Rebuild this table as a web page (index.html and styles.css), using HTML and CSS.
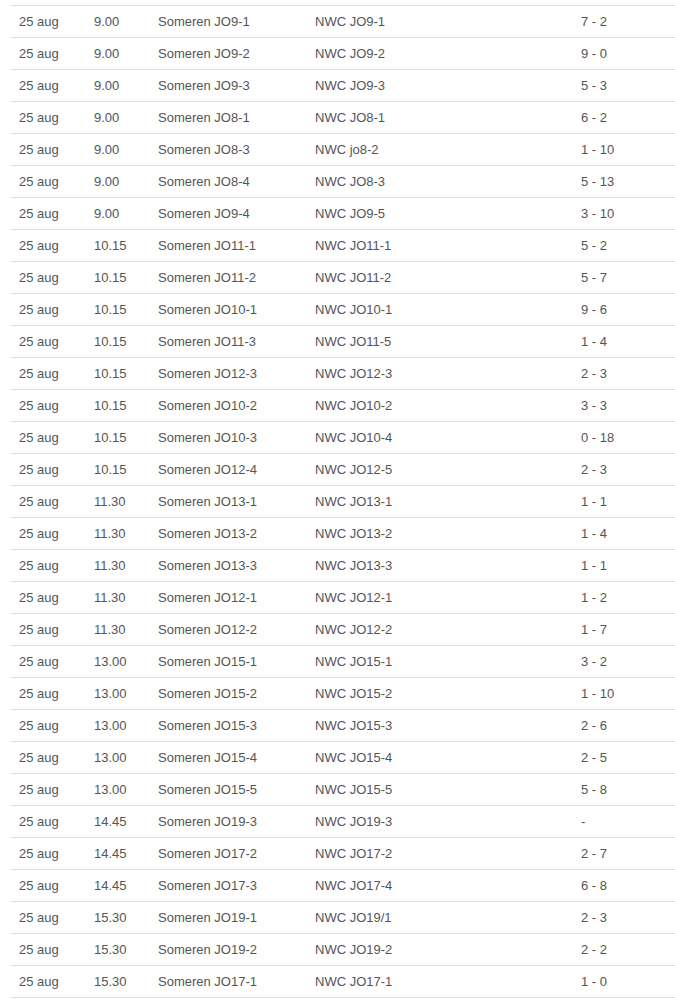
FILE: index.html
```html
<!DOCTYPE html>
<html>
<head>
<meta charset="utf-8">
<link rel="stylesheet" href="styles.css">
</head>
<body>
<div class="wrap">
<table class="matches">
<tbody>
<tr><td>25 aug</td><td>9.00</td><td>Someren JO9-1</td><td>NWC JO9-1</td><td>7 - 2</td></tr>
<tr><td>25 aug</td><td>9.00</td><td>Someren JO9-2</td><td>NWC JO9-2</td><td>9 - 0</td></tr>
<tr><td>25 aug</td><td>9.00</td><td>Someren JO9-3</td><td>NWC JO9-3</td><td>5 - 3</td></tr>
<tr><td>25 aug</td><td>9.00</td><td>Someren JO8-1</td><td>NWC JO8-1</td><td>6 - 2</td></tr>
<tr><td>25 aug</td><td>9.00</td><td>Someren JO8-3</td><td>NWC jo8-2</td><td>1 - 10</td></tr>
<tr><td>25 aug</td><td>9.00</td><td>Someren JO8-4</td><td>NWC JO8-3</td><td>5 - 13</td></tr>
<tr><td>25 aug</td><td>9.00</td><td>Someren JO9-4</td><td>NWC JO9-5</td><td>3 - 10</td></tr>
<tr><td>25 aug</td><td>10.15</td><td>Someren JO11-1</td><td>NWC JO11-1</td><td>5 - 2</td></tr>
<tr><td>25 aug</td><td>10.15</td><td>Someren JO11-2</td><td>NWC JO11-2</td><td>5 - 7</td></tr>
<tr><td>25 aug</td><td>10.15</td><td>Someren JO10-1</td><td>NWC JO10-1</td><td>9 - 6</td></tr>
<tr><td>25 aug</td><td>10.15</td><td>Someren JO11-3</td><td>NWC JO11-5</td><td>1 - 4</td></tr>
<tr><td>25 aug</td><td>10.15</td><td>Someren JO12-3</td><td>NWC JO12-3</td><td>2 - 3</td></tr>
<tr><td>25 aug</td><td>10.15</td><td>Someren JO10-2</td><td>NWC JO10-2</td><td>3 - 3</td></tr>
<tr><td>25 aug</td><td>10.15</td><td>Someren JO10-3</td><td>NWC JO10-4</td><td>0 - 18</td></tr>
<tr><td>25 aug</td><td>10.15</td><td>Someren JO12-4</td><td>NWC JO12-5</td><td>2 - 3</td></tr>
<tr><td>25 aug</td><td>11.30</td><td>Someren JO13-1</td><td>NWC JO13-1</td><td>1 - 1</td></tr>
<tr><td>25 aug</td><td>11.30</td><td>Someren JO13-2</td><td>NWC JO13-2</td><td>1 - 4</td></tr>
<tr><td>25 aug</td><td>11.30</td><td>Someren JO13-3</td><td>NWC JO13-3</td><td>1 - 1</td></tr>
<tr><td>25 aug</td><td>11.30</td><td>Someren JO12-1</td><td>NWC JO12-1</td><td>1 - 2</td></tr>
<tr><td>25 aug</td><td>11.30</td><td>Someren JO12-2</td><td>NWC JO12-2</td><td>1 - 7</td></tr>
<tr><td>25 aug</td><td>13.00</td><td>Someren JO15-1</td><td>NWC JO15-1</td><td>3 - 2</td></tr>
<tr><td>25 aug</td><td>13.00</td><td>Someren JO15-2</td><td>NWC JO15-2</td><td>1 - 10</td></tr>
<tr><td>25 aug</td><td>13.00</td><td>Someren JO15-3</td><td>NWC JO15-3</td><td>2 - 6</td></tr>
<tr><td>25 aug</td><td>13.00</td><td>Someren JO15-4</td><td>NWC JO15-4</td><td>2 - 5</td></tr>
<tr><td>25 aug</td><td>13.00</td><td>Someren JO15-5</td><td>NWC JO15-5</td><td>5 - 8</td></tr>
<tr><td>25 aug</td><td>14.45</td><td>Someren JO19-3</td><td>NWC JO19-3</td><td>-</td></tr>
<tr><td>25 aug</td><td>14.45</td><td>Someren JO17-2</td><td>NWC JO17-2</td><td>2 - 7</td></tr>
<tr><td>25 aug</td><td>14.45</td><td>Someren JO17-3</td><td>NWC JO17-4</td><td>6 - 8</td></tr>
<tr><td>25 aug</td><td>15.30</td><td>Someren JO19-1</td><td>NWC JO19/1</td><td>2 - 3</td></tr>
<tr><td>25 aug</td><td>15.30</td><td>Someren JO19-2</td><td>NWC JO19-2</td><td>2 - 2</td></tr>
<tr><td>25 aug</td><td>15.30</td><td>Someren JO17-1</td><td>NWC JO17-1</td><td>1 - 0</td></tr>
</tbody>
</table>
</div>
</body>
</html>
```
FILE: styles.css
```css
html, body {
  margin: 0;
  padding: 0;
  background: #fff;
}
.wrap {
  padding: 5px 0 0 11px;
}
.matches {
  width: 664px;
  border-collapse: collapse;
  table-layout: fixed;
  font-family: "Liberation Sans", Arial, sans-serif;
  font-size: 13px;
  color: #555;
}
.matches td {
  height: 32px;
  padding: 0 0 0 8px;
  border-top: 1px solid #ddd;
  border-bottom: 1px solid #ddd;
  vertical-align: middle;
  white-space: nowrap;
  box-sizing: border-box;
}
.matches td:nth-child(1) { width: 75px; }
.matches td:nth-child(2) { width: 64px; }
.matches td:nth-child(3) { width: 157px; }
.matches td:nth-child(4) { width: 266px; }
.matches td:nth-child(5) { width: 102px; }
```
